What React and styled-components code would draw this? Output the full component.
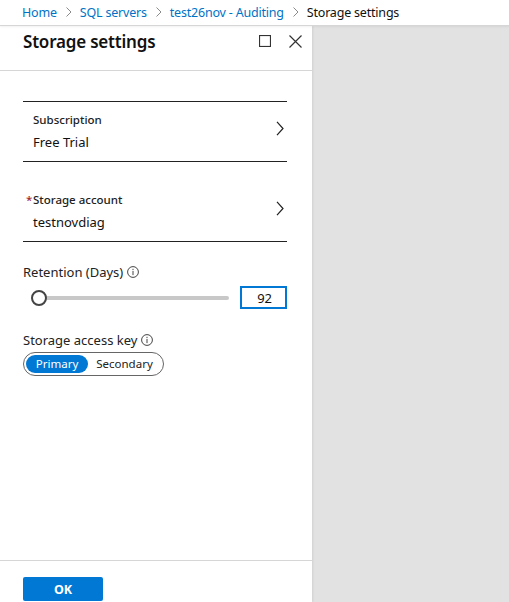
import React, { useState } from "react";
import styled, { createGlobalStyle } from "styled-components";

const GlobalStyle = createGlobalStyle`
  html, body {
    margin: 0;
    padding: 0;
    background: #e2e2e2;
    font-family: "Noto Sans", "Liberation Sans", sans-serif;
    color: #111;
  }
  * {
    box-sizing: border-box;
  }
`;

const Page = styled.div`
  width: 509px;
  height: 602px;
  display: flex;
  flex-direction: column;
  overflow: hidden;
`;

const Breadcrumb = styled.nav`
  height: 26px;
  flex: none;
  display: flex;
  align-items: center;
  padding: 0 0 1px 22px;
  background: #fff;
  border-bottom: 1px solid #d6d6d6;
  box-shadow: 0 1px 2px rgba(0, 0, 0, 0.06);
  font-size: 12.5px;
  letter-spacing: -0.2px;
  position: relative;
  z-index: 2;
`;

const Crumb = styled.span`
  color: ${(p) => (p.$current ? "#111" : "#0072c6")};
  white-space: nowrap;
`;

const CrumbSep = styled.span`
  display: inline-flex;
  margin: 0 8px 0 9px;
  color: #8a8a8a;
`;

const Main = styled.div`
  flex: 1;
  display: flex;
  min-height: 0;
`;

const Panel = styled.section`
  width: 312px;
  flex: none;
  display: flex;
  flex-direction: column;
  background: #fff;
  box-shadow: 1px 0 2px rgba(0, 0, 0, 0.08);
  position: relative;
  z-index: 1;
`;

const Backdrop = styled.div`
  flex: 1;
  background: #e2e2e2;
`;

const Header = styled.header`
  height: 45px;
  flex: none;
  display: flex;
  align-items: flex-start;
  justify-content: space-between;
  padding: 4px 10px 0 23px;
  border-bottom: 1px solid #d6d6d6;
`;

const Title = styled.h1`
  margin: 0;
  font-size: 17px;
  font-weight: 600;
  letter-spacing: -0.2px;
  line-height: 24px;
  color: #111;
`;

const HeaderIcons = styled.div`
  display: flex;
  gap: 18px;
  padding-top: 5px;
  color: #333;
`;

const Body = styled.div`
  flex: 1;
  padding: 30px 25px 0 23px;
  display: flex;
  flex-direction: column;
`;

const FieldList = styled.div`
  border-top: 1px solid #222;
`;

const FieldRow = styled.div`
  display: flex;
  align-items: flex-end;
  justify-content: space-between;
  padding: ${(p) => p.$top}px 3px 9px 10px;
  border-bottom: 1px solid #222;
  cursor: pointer;
`;

const FieldText = styled.div`
  display: flex;
  flex-direction: column;
  gap: 4px;
`;

const FieldLabel = styled.div`
  font-size: 11.5px;
  font-weight: 500;
  line-height: 16px;
  color: #222;
  position: relative;
`;

const Required = styled.span`
  color: #a4262c;
  position: absolute;
  left: -7px;
  top: 0;
`;

const FieldValue = styled.div`
  font-size: 13px;
  line-height: 20px;
  color: #111;
`;

const Chevron = styled.span`
  display: inline-flex;
  margin-bottom: 16px;
  color: #222;
`;

const Label = styled.div`
  display: flex;
  align-items: center;
  gap: 4px;
  margin-top: ${(p) => p.$mt}px;
  font-size: 13px;
  line-height: 20px;
  color: #222;
`;

const SliderRow = styled.div`
  display: flex;
  align-items: center;
  margin-top: 4px;
  gap: 11px;
`;

const SliderTrack = styled.div`
  flex: 1;
  height: 4px;
  margin-left: 16px;
  background: #c8c8c8;
  border-radius: 2px;
  position: relative;
`;

const SliderThumb = styled.div`
  position: absolute;
  top: 50%;
  width: 16px;
  height: 16px;
  margin-top: -8px;
  margin-left: -8px;
  border-radius: 50%;
  background: #fff;
  border: 2px solid #444;
`;

const NumberInput = styled.input`
  width: 47px;
  height: 23px;
  padding: 0 13px 0 0;
  border: 2px solid #0078d4;
  outline: none;
  text-align: right;
  font-family: inherit;
  font-size: 13px;
  color: #111;
  caret-color: #111;
`;

const Toggle = styled.div`
  margin-top: 2px;
  width: 141px;
  height: 24px;
  display: flex;
  align-items: center;
  padding: 2px;
  border: 1px solid #666;
  border-radius: 12px;
`;

const ToggleOption = styled.button`
  height: 18px;
  border: none;
  border-radius: 9px;
  padding: 0;
  width: ${(p) => p.$w}px;
  font-family: inherit;
  font-size: 11.5px;
  line-height: 18px;
  cursor: pointer;
  background: ${(p) => (p.$active ? "#0078d4" : "transparent")};
  color: ${(p) => (p.$active ? "#fff" : "#222")};
`;

const Footer = styled.footer`
  flex: none;
  border-top: 1px solid #d6d6d6;
  padding: 16px 0 1px 23px;
`;

const OkButton = styled.button`
  width: 80px;
  height: 24px;
  border: none;
  border-radius: 2px;
  background: #0078d4;
  color: #fff;
  font-family: inherit;
  font-size: 12.5px;
  font-weight: 700;
  cursor: pointer;
`;

function CrumbChevron() {
  return (
    <CrumbSep>
      <svg width="6" height="10" viewBox="0 0 6 10">
        <path d="M0.5 0.5 L5 5 L0.5 9.5" fill="none" stroke="currentColor" strokeWidth="1" />
      </svg>
    </CrumbSep>
  );
}

function InfoIcon() {
  return (
    <svg width="12" height="12" viewBox="0 0 12 12">
      <circle cx="6" cy="6" r="5.4" fill="none" stroke="#444" strokeWidth="1" />
      <rect x="5.5" y="2.8" width="1" height="1.2" fill="#444" />
      <rect x="5.5" y="4.9" width="1" height="4.2" fill="#444" />
    </svg>
  );
}

function RowChevron() {
  return (
    <Chevron>
      <svg width="8" height="15" viewBox="0 0 8 15">
        <path d="M1 0.8 L7 7.5 L1 14.2" fill="none" stroke="currentColor" strokeWidth="1.2" />
      </svg>
    </Chevron>
  );
}

export default function App() {
  const [key, setKey] = useState("primary");
  const [days, setDays] = useState("92");

  return (
    <>
      <GlobalStyle />
      <Page>
        <Breadcrumb>
          <Crumb>Home</Crumb>
          <CrumbChevron />
          <Crumb>SQL servers</Crumb>
          <CrumbChevron />
          <Crumb>test26nov - Auditing</Crumb>
          <CrumbChevron />
          <Crumb $current>Storage settings</Crumb>
        </Breadcrumb>
        <Main>
          <Panel>
            <Header>
              <Title>Storage settings</Title>
              <HeaderIcons>
                <svg width="12" height="12" viewBox="0 0 12 12">
                  <rect x="0.5" y="0.5" width="11" height="11" fill="none" stroke="currentColor" strokeWidth="1.2" />
                </svg>
                <svg width="13" height="13" viewBox="0 0 13 13">
                  <path d="M0.5 0.5 L12.5 12.5 M12.5 0.5 L0.5 12.5" stroke="currentColor" strokeWidth="1.2" />
                </svg>
              </HeaderIcons>
            </Header>
            <Body>
              <FieldList>
                <FieldRow $top={10}>
                  <FieldText>
                    <FieldLabel>Subscription</FieldLabel>
                    <FieldValue>Free Trial</FieldValue>
                  </FieldText>
                  <RowChevron />
                </FieldRow>
                <FieldRow $top={30}>
                  <FieldText>
                    <FieldLabel>
                      <Required>*</Required>Storage account
                    </FieldLabel>
                    <FieldValue>testnovdiag</FieldValue>
                  </FieldText>
                  <RowChevron />
                </FieldRow>
              </FieldList>

              <Label $mt={20}>
                Retention (Days) <InfoIcon />
              </Label>
              <SliderRow>
                <SliderTrack>
                  <SliderThumb style={{ left: "0%" }} />
                </SliderTrack>
                <NumberInput value={days} onChange={(e) => setDays(e.target.value)} />
              </SliderRow>

              <Label $mt={21}>
                Storage access key <InfoIcon />
              </Label>
              <Toggle>
                <ToggleOption $w={62} $active={key === "primary"} onClick={() => setKey("primary")}>
                  Primary
                </ToggleOption>
                <ToggleOption $w={73} $active={key === "secondary"} onClick={() => setKey("secondary")}>
                  Secondary
                </ToggleOption>
              </Toggle>
            </Body>
            <Footer>
              <OkButton>OK</OkButton>
            </Footer>
          </Panel>
          <Backdrop />
        </Main>
      </Page>
    </>
  );
}
